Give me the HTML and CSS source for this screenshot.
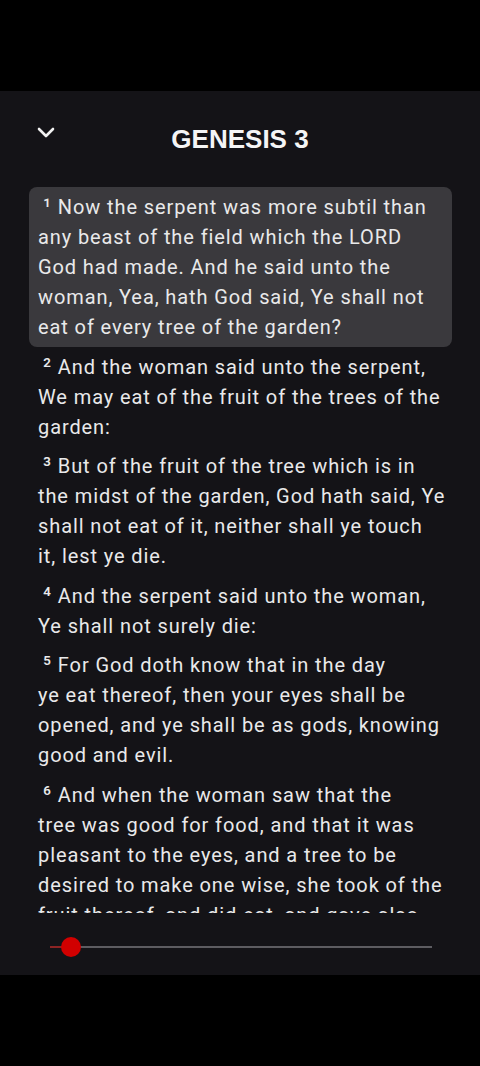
FILE: index.html
```html
<!DOCTYPE html>
<html>
<head>
<meta charset="utf-8">
<link rel="stylesheet" href="styles.css">
</head>
<body>
<div class="statusbar"></div>
<div class="panel">
  <header class="header">
    <svg class="chevron" width="18" height="11" viewBox="0 0 18 11"><path d="M2 2 L9 9 L16 2" fill="none" stroke="#f2f2f2" stroke-width="2.6" stroke-linecap="round" stroke-linejoin="round"/></svg>
    <h1 class="title">GENESIS 3</h1>
    <span></span>
  </header>
  <div class="verses">
    <p class="verse active"><span class="num">¹</span> Now the serpent was more subtil than<br>any beast of the field which the LORD<br>God had made. And he said unto the<br>woman, Yea, hath God said, Ye shall not<br>eat of every tree of the garden?</p>
    <p class="verse"><span class="num">²</span> And the woman said unto the serpent,<br>We may eat of the fruit of the trees of the<br>garden:</p>
    <p class="verse"><span class="num">³</span> But of the fruit of the tree which is in<br>the midst of the garden, God hath said, Ye<br>shall not eat of it, neither shall ye touch<br>it, lest ye die.</p>
    <p class="verse"><span class="num">⁴</span> And the serpent said unto the woman,<br>Ye shall not surely die:</p>
    <p class="verse"><span class="num">⁵</span> For God doth know that in the day<br>ye eat thereof, then your eyes shall be<br>opened, and ye shall be as gods, knowing<br>good and evil.</p>
    <p class="verse"><span class="num">⁶</span> And when the woman saw that the<br>tree was good for food, and that it was<br>pleasant to the eyes, and a tree to be<br>desired to make one wise, she took of the<br>fruit thereof, and did eat, and gave also<br>unto her husband with her; and he did<br>eat.</p>
    <p class="verse"><span class="num">⁷</span> And the eyes of them both were opened, and they knew that they were naked; and they sewed fig leaves together, and made themselves aprons.</p>
  </div>
  <div class="slider">
    <div class="track">
      <div class="fill"></div>
      <div class="thumb"></div>
    </div>
  </div>
</div>
</body>
</html>
```
FILE: styles.css
```css
html, body {
  margin: 0;
  padding: 0;
  background: #000;
}
body {
  width: 480px;
  height: 1066px;
  overflow: hidden;
  font-family: Roboto, "Noto Sans", sans-serif;
}
.statusbar {
  height: 91px;
  background: #000;
}
.panel {
  height: 884px;
  background: #141317;
  display: flex;
  flex-direction: column;
}
.header {
  height: 96px;
  display: grid;
  grid-template-columns: 1fr auto 1fr;
  align-items: center;
  flex: none;
}
.chevron {
  margin-left: 37px;
  margin-bottom: 14px;
}
.title {
  margin: 0;
  font-family: "Liberation Sans", Arial, sans-serif;
  font-weight: 700;
  font-size: 26px;
  line-height: 30px;
  color: #f5f5f5;
  letter-spacing: 0;
}
.verses {
  height: 726px;
  overflow: hidden;
  padding: 0 28px 0 29px;
  flex: none;
}
.verse {
  margin: 0;
  padding: 5px 4px 4.5px 9px;
  font-size: 20px;
  line-height: 30px;
  letter-spacing: 0.9px;
  color: #e9e9ea;
  border-radius: 8px;
}
.verse.active {
  background: #3a393d;
}
.num {
  margin-left: 5px;
  font-size: 22px;
}
.slider {
  flex: none;
  height: 62px;
  box-sizing: border-box;
  padding: 5px 48px 0 50px;
  display: flex;
  align-items: center;
}
.track {
  position: relative;
  width: 100%;
  height: 2px;
  background: #5d5c61;
}
.fill {
  width: 21px;
  height: 100%;
  background: #8c2424;
}
.thumb {
  position: absolute;
  left: 11px;
  top: -9px;
  width: 20px;
  height: 20px;
  border-radius: 50%;
  background: #d10000;
}
```
